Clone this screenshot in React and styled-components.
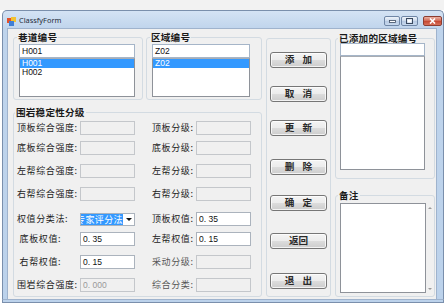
import React from 'react'
import styled, { createGlobalStyle } from 'styled-components'

const CJK = `"Noto Sans CJK SC", "Noto Sans", sans-serif`
const LATIN = `"Liberation Sans", Arial, sans-serif`

const GlobalStyle = createGlobalStyle`
html, body {
  margin: 0;
  padding: 0;
  background: #ffffff;
}
body {
  width: 444px;
  height: 308px;
  overflow: hidden;
  font-family: ${CJK};
}
`
const TopStrip = styled.div`
height: 10px;
background: #f2f2f2;
`
const Window = styled.div`
margin-left: 2px;
width: 442px;
height: 289px;
box-sizing: border-box;
border: 1px solid #7a8fac;
border-bottom: none;
border-radius: 5px 5px 0 0;
background: linear-gradient(#d4e3f4, #bfd4ec 18px, #bcd2eb);
display: flex;
flex-direction: column;
`
const TitleBar = styled.div`
height: 17px;
box-sizing: border-box;
padding: 3px 1px 0 4px;
display: flex;
align-items: center;
flex-shrink: 0;
`
const Title = styled.div`
margin-left: 3px;
font: 7.4px/1 "Noto Sans", "Open Sans", sans-serif;
color: #1e2a38;
`
const Controls = styled.div`
margin-left: auto;
display: flex;
align-items: center;
gap: 1px;
`
const CtrlBtn = styled.div`
box-sizing: border-box;
width: ${p => p.$w}px;
height: 10px;
margin-left: ${p => p.$gap || 0}px;
border: 1px solid ${p => (p.$close ? '#8c3d31' : '#6f86a6')};
border-radius: 2px;
background: ${p => (p.$close
    ? 'linear-gradient(#eab2a4, #d06450 50%, #c4452f 51%, #d8705a)'
    : 'linear-gradient(#eef3fa, #c9d8eb 50%, #b6c9e2 51%, #c8d9ee)')};
display: flex;
align-items: center;
justify-content: center;
`
const Client = styled.div`
flex: 1;
margin: 0 6px 0 4px;
background: #f0f0f0;
border: 1px solid #9fb3cd;
border-bottom: none;
padding: 3px 0 0 5px;
display: flex;
align-items: flex-start;
`
const BottomEdge = styled.div`
height: 4px;
margin-left: 2px;
width: 442px;
box-sizing: border-box;
background: #bcd2eb;
border: 1px solid #7a8fac;
border-top: 1px solid #9fb3cd;
`
const Column = styled.div`
display: flex;
flex-direction: column;
width: ${p => p.$w}px;
margin-left: ${p => p.$ml || 0}px;
`
const TopRow = styled.div`
display: flex;
gap: 3px;
`
const Group = styled.fieldset`
box-sizing: border-box;
margin: ${p => p.$mt || 0}px 0 0 0;
min-width: 0;
width: ${p => p.$w}px;
height: ${p => p.$h}px;
border: 1px solid #d3dbe2;
border-radius: 3px;
padding: 0 ${p => p.$pr || 0}px 0 ${p => p.$pl || 0}px;
display: flex;
flex-direction: column;
`
const Legend = styled.legend`
margin-left: -2px;
padding: 0 1px;
font: 700 9.6px/10px ${CJK};
letter-spacing: 0.2px;
color: #1a1a1a;
`
const TextBox = styled.div`
box-sizing: border-box;
height: ${p => p.$h}px;
margin-top: ${p => p.$mt || 0}px;
border: 1px solid #a5b5c8;
background: #fff;
padding-left: 2px;
font: 8.5px/12px ${LATIN};
color: #111;
`
const ListBox = styled.div`
box-sizing: border-box;
height: ${p => p.$h}px;
border: 1px solid #8e9299;
border-top-color: #a9adb3;
background: #fff;
`
const ListItem = styled.div`
height: 9px;
padding-left: 2px;
font: 8.5px/9px ${LATIN};
color: ${p => (p.$selected ? '#fff' : '#111')};
background: ${p => (p.$selected ? '#3399ff' : 'transparent')};
`
const Rows = styled.div`
display: flex;
flex-direction: column;
`
const FieldRow = styled.div`
display: grid;
grid-template-columns: 63px 55px 17px 44px 55px;
align-items: center;
height: 14px;
margin-top: ${p => p.$mt}px;
`
const Label = styled.div`
grid-column: ${p => p.$col};
font: 9px/14px ${CJK};
letter-spacing: 0.6px;
color: ${p => (p.$dim ? '#555' : '#222')};
white-space: nowrap;
`
const Field = styled.div`
grid-column: ${p => p.$col};
box-sizing: border-box;
height: 14px;
border: 1px solid ${p => (p.$disabled ? '#c4c7cb' : '#abb3bd')};
background: ${p => (p.$disabled ? '#f0f0f0' : '#fff')};
padding-left: 2px;
font: 8.5px/12px ${LATIN};
color: ${p => (p.$disabled ? '#999' : '#111')};
`
const Combo = styled.div`
grid-column: 2;
box-sizing: border-box;
height: 13px;
border: 1px solid #abb3bd;
background: #fff;
display: flex;
align-items: center;
`
const ComboText = styled.div`
width: 42px;
overflow: hidden;
display: flex;
justify-content: flex-end;
`
const ComboSel = styled.span`
background: #3399ff;
color: #fff;
white-space: nowrap;
font: 9px/11px ${CJK};
letter-spacing: 0.4px;
`
const ComboArrow = styled.div`
flex: 1;
display: flex;
align-items: center;
justify-content: center;
&::after {
  content: '';
  border-top: 3px solid #111;
  border-left: 3px solid transparent;
  border-right: 3px solid transparent;
}
`
const ButtonPanel = styled.div`
box-sizing: border-box;
width: 65px;
height: 259px;
margin: 6px 0 0 4px;
border: 1px solid #d3dbe2;
border-radius: 3px;
padding-left: 3px;
display: flex;
flex-direction: column;
`
const Button = styled.button`
box-sizing: border-box;
width: 57px;
height: 16px;
margin-top: ${p => p.$mt}px;
padding: 0;
border: 1px solid #767676;
border-radius: 3px;
background: linear-gradient(#f4f4f4 0%, #ececec 48%, #dcdcdc 52%, #cdcdcd 100%);
box-shadow: inset 0 0 0 1px rgba(255, 255, 255, 0.75);
font: 700 9.6px/1 ${CJK};
color: #2a2a2a;
word-spacing: 6px;
`
const MemoRow = styled.div`
display: flex;
margin-top: 3px;
height: 90px;
`
const Memo = styled.div`
box-sizing: border-box;
width: 86px;
border: 1px solid #8e9299;
background: #fff;
`
const ScrollStub = styled.div`
flex: 1;
display: flex;
flex-direction: column;
justify-content: space-between;
align-items: center;
padding: 4px 0 3px;
`
const Arrow = styled.div`
border-left: 2px solid transparent;
border-right: 2px solid transparent;
${p => (p.$down ? 'border-top: 2px solid #9a9a9a;' : 'border-bottom: 2px solid #9a9a9a;')}
`

const AppIcon = () => (
  <svg width="9" height="9" viewBox="0 0 9 9">
    <rect x="0" y="1" width="5" height="5" fill="#e2502c" />
    <rect x="4" y="0" width="5" height="5" fill="#f2c230" />
    <rect x="2" y="4" width="5" height="5" fill="#3f7fd6" />
  </svg>
)

const stability = [
  { mt: 4, left: '顶板综合强度:', right: '顶板分级:' },
  { mt: 6, left: '底板综合强度:', right: '底板分级:' },
  { mt: 9, left: '左帮综合强度:', right: '左帮分级:' },
  { mt: 9, left: '右帮综合强度:', right: '右帮分级:' },
]

const buttons = [
  { mt: 13, text: '添 加' },
  { mt: 18, text: '取 消' },
  { mt: 18, text: '更 新' },
  { mt: 23, text: '删 除' },
  { mt: 20, text: '确 定' },
  { mt: 22, text: '返回' },
  { mt: 24, text: '退 出' },
]

export default function App() {
  return (
    <>
      <GlobalStyle />
      <TopStrip />
      <Window>
        <TitleBar>
          <AppIcon />
          <Title>ClassfyForm</Title>
          <Controls>
            <CtrlBtn $w={16}>
              <svg width="7" height="3"><rect x="0.5" y="0.5" width="6" height="2" fill="#fff" stroke="#3b4a60" strokeWidth="0.8" /></svg>
            </CtrlBtn>
            <CtrlBtn $w={17}>
              <svg width="7" height="6"><rect x="0.5" y="0.5" width="6" height="5" fill="none" stroke="#3b4a60" strokeWidth="1" /><rect x="1.5" y="1.8" width="4" height="2.7" fill="#fff" /></svg>
            </CtrlBtn>
            <CtrlBtn $w={19} $gap={4} $close>
              <svg width="7" height="6"><path d="M1 0.5 L6 5.5 M6 0.5 L1 5.5" stroke="#fff" strokeWidth="1.6" /></svg>
            </CtrlBtn>
          </Controls>
        </TitleBar>
        <Client>
          <Column $w={249}>
            <TopRow>
              <Group $w={130} $h={68} $pl={5} $pr={7}>
                <Legend>巷道编号</Legend>
                <TextBox $h={14} $mt={2}>H001</TextBox>
                <ListBox $h={39}>
                  <ListItem $selected>H001</ListItem>
                  <ListItem>H002</ListItem>
                </ListBox>
              </Group>
              <Group $w={116} $h={68} $pl={5} $pr={11}>
                <Legend>区域编号</Legend>
                <TextBox $h={14} $mt={2}>Z02</TextBox>
                <ListBox $h={39}>
                  <ListItem $selected>Z02</ListItem>
                </ListBox>
              </Group>
            </TopRow>
            <Group $w={249} $h={190} $mt={7} $pl={3}>
              <Legend>围岩稳定性分级</Legend>
              <Rows>
                {stability.map(r => (
                  <FieldRow key={r.left} $mt={r.mt}>
                    <Label $col={1}>{r.left}</Label>
                    <Field $col={2} $disabled />
                    <Label $col={4}>{r.right}</Label>
                    <Field $col={5} $disabled />
                  </FieldRow>
                ))}
                <FieldRow $mt={11}>
                  <Label $col={1}>权值分类法:</Label>
                  <Combo>
                    <ComboText><ComboSel>专家评分法</ComboSel></ComboText>
                    <ComboArrow />
                  </Combo>
                  <Label $col={4}>顶板权值:</Label>
                  <Field $col={5}>0. 35</Field>
                </FieldRow>
                <FieldRow $mt={6}>
                  <Label $col={1}>&nbsp;底板权值:</Label>
                  <Field $col={2}>0. 35</Field>
                  <Label $col={4}>左帮权值:</Label>
                  <Field $col={5}>0. 15</Field>
                </FieldRow>
                <FieldRow $mt={9}>
                  <Label $col={1}>&nbsp;右帮权值:</Label>
                  <Field $col={2}>0. 15</Field>
                  <Label $col={4} $dim>采动分级:</Label>
                  <Field $col={5} $disabled />
                </FieldRow>
                <FieldRow $mt={9}>
                  <Label $col={1}>围岩综合强度:</Label>
                  <Field $col={2} $disabled>0. 000</Field>
                  <Label $col={4} $dim>综合分类:</Label>
                  <Field $col={5} $disabled />
                </FieldRow>
              </Rows>
            </Group>
          </Column>
          <ButtonPanel>
            {buttons.map(b => (
              <Button key={b.text} $mt={b.mt}>{b.text}</Button>
            ))}
          </ButtonPanel>
          <Column $w={100} $ml={4}>
            <Group $w={100} $h={146} $mt={1} $pl={4} $pr={9}>
              <Legend>已添加的区域编号</Legend>
              <TextBox $h={13}></TextBox>
              <ListBox $h={114} />
            </Group>
            <Group $w={100} $h={107} $mt={11} $pl={4}>
              <Legend>备注</Legend>
              <MemoRow>
                <Memo />
                <ScrollStub>
                  <Arrow />
                  <Arrow $down />
                </ScrollStub>
              </MemoRow>
            </Group>
          </Column>
        </Client>
      </Window>
      <BottomEdge />
    </>
  )
}
